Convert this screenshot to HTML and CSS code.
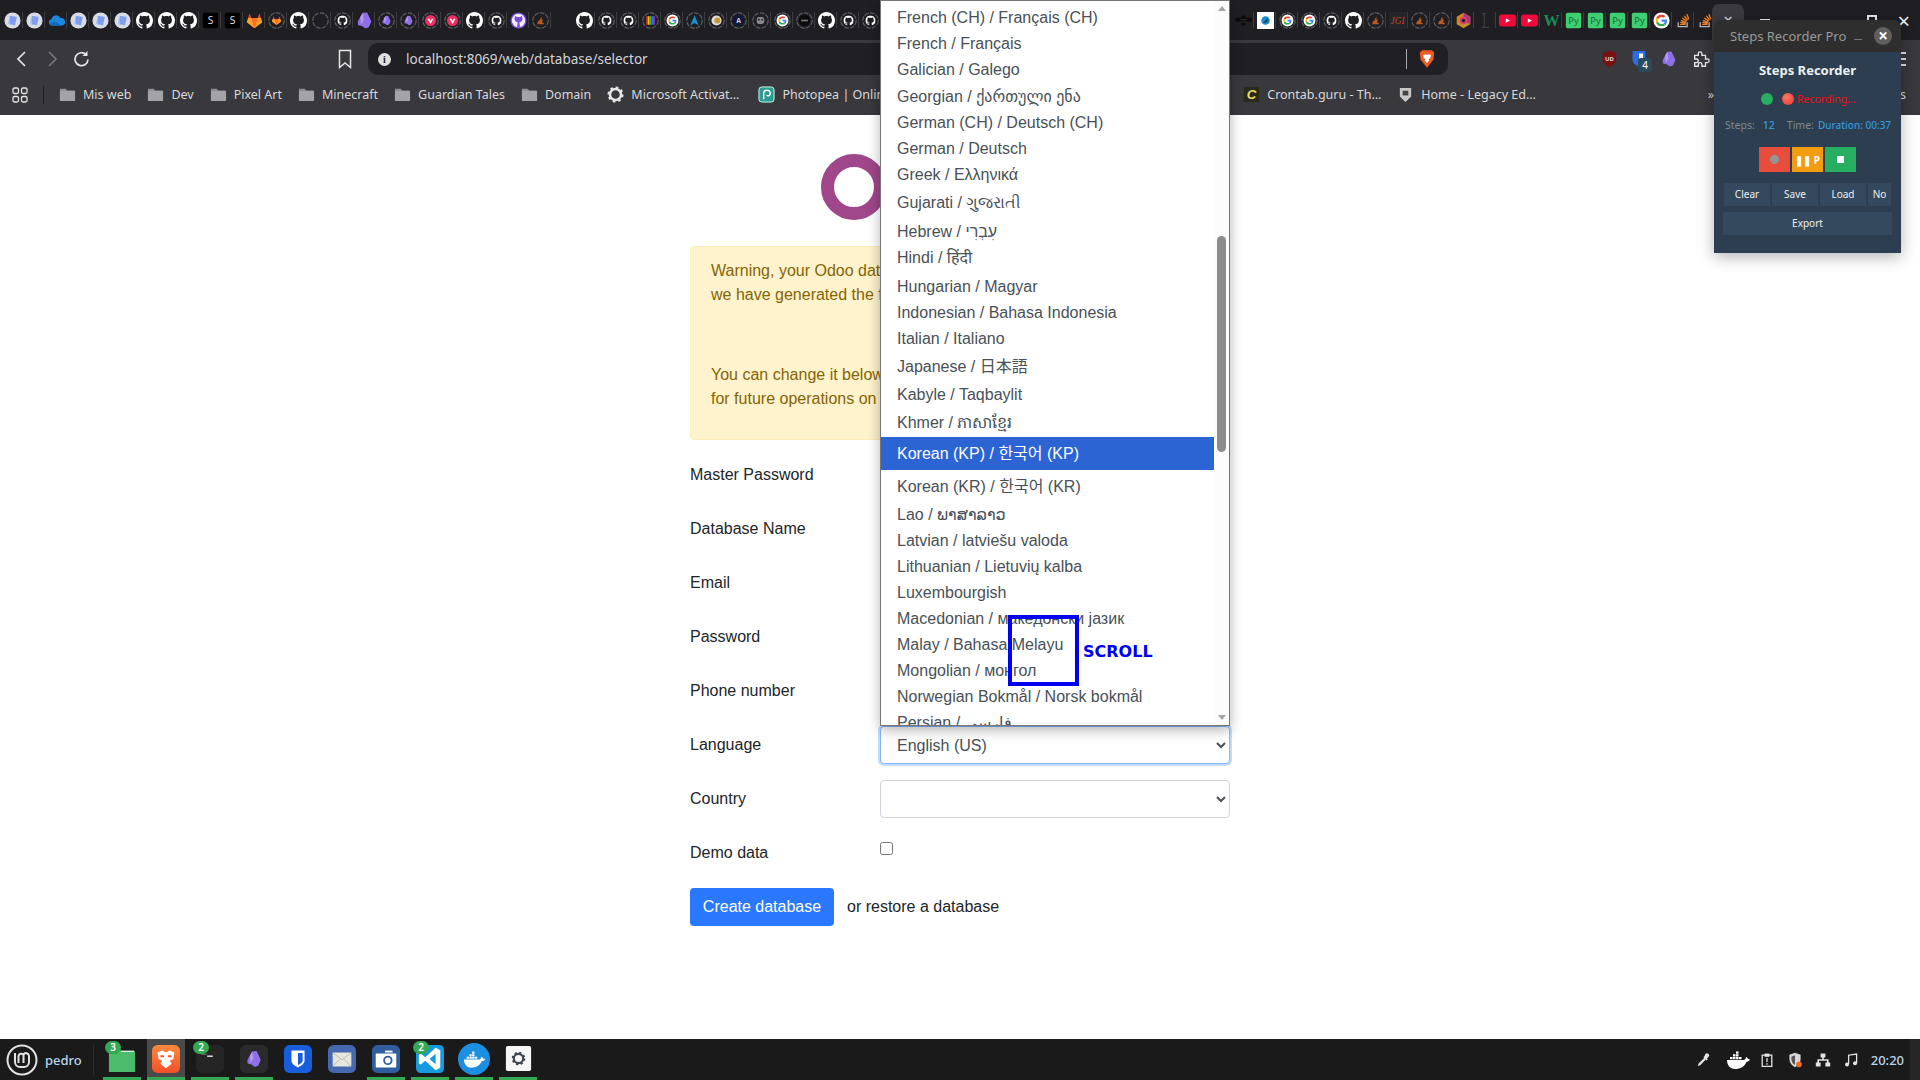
FILE: index.html
```html
<!DOCTYPE html>
<html lang="en">
<head>
    <meta charset="UTF-8">
    <meta name="viewport" content="width=device-width, initial-scale=1.0">
    <title>Odoo - Database selector</title>
    <link rel="stylesheet" href="styles.css">
</head>
<body>
    <!-- shared icons -->
    <svg class="defs" aria-hidden="true">
        <symbol id="m-gh" viewBox="0 0 16 16"><path fill="#fff" d="M8 0C3.58 0 0 3.58 0 8c0 3.54 2.29 6.53 5.47 7.59.4.07.55-.17.55-.38 0-.19-.01-.82-.01-1.49-2.01.37-2.53-.49-2.69-.94-.09-.23-.48-.94-.82-1.13-.28-.15-.68-.52-.01-.53.63-.01 1.08.58 1.23.82.72 1.21 1.87.87 2.33.66.07-.52.28-.87.51-1.07-1.78-.2-3.64-.89-3.64-3.95 0-.87.31-1.59.82-2.15-.08-.2-.36-1.02.08-2.12 0 0 .67-.21 2.2.82.64-.18 1.32-.27 2-.27.68 0 1.36.09 2 .27 1.53-1.04 2.2-.82 2.2-.82.44 1.1.16 1.92.08 2.12.51.56.82 1.27.82 2.15 0 3.07-1.87 3.75-3.65 3.95.29.25.54.73.54 1.48 0 1.07-.01 1.93-.01 2.2 0 .21.15.46.55.38A8.013 8.013 0 0016 8c0-4.42-3.58-8-8-8z"/></symbol>
        <symbol id="m-g" viewBox="0 0 48 48"><path fill="#EA4335" d="M24 9.500c3.500 0 6.700 1.200 9.200 3.600l6.900-6.900C35.900 2.400 30.500 0 24 0 14.600 0 6.500 5.400 2.600 13.200l8 6.200C12.500 13.700 17.800 9.500 24 9.500z"/><path fill="#4285F4" d="M46.900 24.500c0-1.600-.1-3.100-.4-4.500H24v9h12.900c-.6 3-2.200 5.500-4.700 7.200l7.700 6c4.500-4.200 7-10.300 7-17.700z"/><path fill="#FBBC05" d="M10.500 28.600c-.5-1.400-.8-3-.8-4.600s.3-3.200.8-4.600l-8-6.200C.9 16.500 0 20.100 0 24s.9 7.500 2.600 10.800l7.900-6.200z"/><path fill="#34A853" d="M24 48c6.500 0 11.900-2.100 15.900-5.800l-7.700-6c-2.200 1.400-4.900 2.300-8.200 2.300-6.200 0-11.500-4.200-13.400-9.900l-8 6.200C6.500 42.600 14.600 48 24 48z"/></symbol>
        <symbol id="m-obs" viewBox="0 0 20 20"><path fill="#8e6fe8" d="M8 1l5-.5 3 6 2 5-3 6.500-4 1.500-4-3-4.500-1-.5-4z"/><path fill="#b49cf5" d="M8 1l1 8-3 6-1-9z"/></symbol>
        <symbol id="m-lab" viewBox="0 0 20 20"><path fill="#e24329" d="M10 19L1 12l1.500-5L4 1.500 6.500 7h7L16 1.500 17.500 7l1.500 5z"/><path fill="#fca326" d="M10 19L1 12l1.500-5H6.500zM10 19l9-7-1.500-5h-4z"/><path fill="#fc6d26" d="M6.500 7h7L10 19z"/></symbol>
        <symbol id="m-so" viewBox="0 0 20 20"><path fill="#bcbbbb" d="M3 12v6h12v-6h-1.500v4.500h-9V12z"/><path stroke="#f48024" stroke-width="1.600" d="M6 14.500h6.500M6.200 12.200l6.400 1M7 9.800l6 2.300M8.500 7l5.300 3.700M11 4.500l3.800 5M14 2.500l2.200 6" fill="none"/></symbol>

        <symbol id="doc" viewBox="0 0 20 20"><circle cx="10" cy="10" r="9.500" fill="#d9dce4"/><path fill="#7d9df0" d="M7 4.500l8 1.500-2 9.500-8-1.500z"/><path fill="#b9c9f5" d="M6 6l1 8.500-2-.5z"/></symbol>
        <symbol id="cloud" viewBox="0 0 20 20"><path fill="#1f86dc" d="M5 16a4 4 0 01-.8-7.900 5.500 5.500 0 0110.300-1 4.500 4.500 0 012 8.900z"/><path fill="#0f6cc2" d="M5 16a4 4 0 01-3-1.500c2-3 6-4 9-2l5 3.500z"/></symbol>
        <symbol id="gh" viewBox="0 0 20 20"><use href="#m-gh" width="20" height="20"/></symbol>
        <symbol id="lab" viewBox="0 0 20 20"><use href="#m-lab" width="20" height="20"/></symbol>
        <symbol id="ring" viewBox="0 0 20 20"><circle cx="10" cy="10" r="9" fill="none" stroke="#5b5b60" stroke-width="1.500" stroke-dasharray="5.500 1.400"/></symbol>
        <symbol id="obs" viewBox="0 0 20 20"><use href="#m-obs" width="20" height="20"/></symbol>
        <symbol id="gh-r" viewBox="0 0 20 20"><use href="#ring" width="20" height="20"/><use href="#m-gh" x="4" y="4" width="12" height="12"/></symbol>
        <symbol id="lab-r" viewBox="0 0 20 20"><use href="#ring" width="20" height="20"/><use href="#m-lab" x="4" y="4" width="12" height="12"/></symbol>
        <symbol id="obs-r" viewBox="0 0 20 20"><use href="#ring" width="20" height="20"/><use href="#m-obs" x="4" y="4" width="12" height="12"/></symbol>
        <symbol id="viv-r" viewBox="0 0 20 20"><use href="#ring" width="20" height="20"/><circle cx="10" cy="10" r="6.500" fill="#ee2f62"/><path fill="#fff" d="M6.500 8h2.200L10 10.500 11.300 8h2.200L10 14z"/></symbol>
        <symbol id="gh-p" viewBox="0 0 20 20"><circle cx="10" cy="10" r="9.500" fill="#7a4be0"/><circle cx="10" cy="10" r="7.800" fill="#f4f0ff"/><path fill="#7a4be0" d="M6 4.500l2 1.500h4l2-1.500.7 3.200c0 3-1.700 4.300-3.700 4.500l.7 5.300H8.300l.7-5.300c-2-.2-3.700-1.500-3.700-4.500z"/></symbol>
        <symbol id="so-r" viewBox="0 0 20 20"><use href="#ring" width="20" height="20"/><path fill="#b85a22" d="M6 14.500h8l-.5-2-2-.5 1.500-3-2-.5.5-3-2 2-.5 2.500-2 1z"/></symbol>
        <symbol id="rb-r" viewBox="0 0 20 20"><use href="#ring" width="20" height="20"/><rect x="5" y="5" width="2" height="10" fill="#e33"/><rect x="7" y="5" width="2" height="10" fill="#fb0"/><rect x="9" y="5" width="2" height="10" fill="#3b3"/><rect x="11" y="5" width="2" height="10" fill="#36e"/><rect x="13" y="5" width="2" height="10" fill="#a3d"/></symbol>
        <symbol id="g-r" viewBox="0 0 20 20"><use href="#ring" width="20" height="20"/><circle cx="10" cy="10" r="7" fill="#fff"/><use href="#m-g" x="5" y="5" width="10" height="10"/></symbol>
        <symbol id="a-r" viewBox="0 0 20 20"><use href="#ring" width="20" height="20"/><path fill="#1793d1" d="M10 4l5 12-5-3-5 3z"/></symbol>
        <symbol id="y-r" viewBox="0 0 20 20"><use href="#ring" width="20" height="20"/><circle cx="10" cy="10" r="6" fill="#ddd"/><circle cx="11" cy="10" r="3.500" fill="#c8962a"/></symbol>
        <symbol id="bug-r" viewBox="0 0 20 20"><use href="#ring" width="20" height="20"/><rect x="5.500" y="6" width="9" height="8" rx="3" fill="#8a8a8f"/><rect x="7" y="8" width="2" height="2" fill="#222"/><rect x="11" y="8" width="2" height="2" fill="#222"/></symbol>
        <symbol id="blk-r" viewBox="0 0 20 20"><use href="#ring" width="20" height="20"/><circle cx="10" cy="10" r="6.500" fill="#0a0a0a"/><rect x="6" y="9" width="8" height="2" fill="#777"/></symbol>
        <symbol id="bee" viewBox="0 0 20 20"><ellipse cx="10" cy="10" rx="4" ry="6" fill="#0c0c0c"/><ellipse cx="4" cy="9" rx="4" ry="2.500" fill="#0c0c0c"/><ellipse cx="16" cy="9" rx="4" ry="2.500" fill="#0c0c0c"/><path stroke="#333" d="M6 9h8M6 12h8"/></symbol>
        <symbol id="wsq" viewBox="0 0 20 20"><rect width="20" height="20" fill="#fff"/><circle cx="10" cy="10" r="5" fill="#1d8ec9"/><path fill="#163a56" d="M7 13l6-6-1 5z"/></symbol>
        <symbol id="hex" viewBox="0 0 20 20"><path fill="#c98a2a" d="M10 1l8 4.500v9L10 19l-8-4.500v-9z"/><path fill="#b2357c" d="M10 1l8 4.500v9L10 10z"/><circle cx="10" cy="10" r="4.500" fill="#d43d6c"/><circle cx="10" cy="10" r="2" fill="#2b1a22"/></symbol>
        <symbol id="ibm" viewBox="0 0 20 20"><path stroke="#3e3e42" stroke-width="1.500" fill="none" d="M6 2h5M8.500 2v16M6 18h8"/></symbol>
        <symbol id="yt" viewBox="0 0 20 20"><rect y="3" width="20" height="14" rx="3.500" fill="#f00a3c"/><path fill="#fff" d="M8 7.500l5 2.500-5 2.500z"/></symbol>
        <symbol id="g" viewBox="0 0 20 20"><circle cx="10" cy="10" r="9.500" fill="#fff"/><use href="#m-g" x="3" y="3" width="14" height="14"/></symbol>
        <symbol id="so" viewBox="0 0 20 20"><use href="#m-so" width="20" height="20"/></symbol>
        <symbol id="folder" viewBox="0 0 18 18"><path fill="#8c8c90" d="M1 3h6l2 2h8v11H1z"/><rect x="1" y="5" width="16" height="11" rx="1" fill="#a4a4a8"/></symbol>
        <symbol id="gear" viewBox="0 0 20 20"><circle cx="10" cy="10" r="6.500" fill="none" stroke="currentColor" stroke-width="3"/><circle cx="10" cy="10" r="8" fill="none" stroke="currentColor" stroke-width="3" stroke-dasharray="3 3.280"/></symbol>
        <symbol id="whale" viewBox="0 0 24 18"><path fill="currentColor" d="M1 9h17c1-.2 2-1.800 2-3 1 .4 1.800 1.200 2 2.200.8-.2 1.500 0 2 .4-.8 1.600-2 2.200-3.500 2.100C18.500 15.500 14.500 18 9 18 4 18 1 14 1 9z"/><path fill="currentColor" d="M4 6h2.500v2.300H4zM7 6h2.500v2.300H7zM10 6h2.500v2.300H10zM7 3.200h2.500v2.300H7zM10 3.200h2.500v2.300H10zM13 6h2.500v2.300H13zM10 .4h2.500v2.300H10z"/></symbol>
        <symbol id="lion" viewBox="0 0 20 24"><path fill="#f15a22" d="M4 1h12l3 3-1 9-8 10-8-10-1-9z"/><path fill="#fff" d="M5 7l3-1 2 1 2-1 3 1-1 4-2 1 1 2-3 3-3-3 1-2-2-1z"/></symbol>
    </svg>

    <div class="screen">
        <header class="browser">
            <div class="tabstrip">
                <span class="fav"><svg><use href="#doc"/></svg></span>
                <span class="fav"><svg><use href="#doc"/></svg></span>
                <span class="fav"><svg><use href="#cloud"/></svg></span>
                <span class="fav"><svg><use href="#doc"/></svg></span>
                <span class="fav"><svg><use href="#doc"/></svg></span>
                <span class="fav"><svg><use href="#doc"/></svg></span>
                <span class="fav"><svg><use href="#gh"/></svg></span>
                <span class="fav"><svg><use href="#gh"/></svg></span>
                <span class="fav"><svg><use href="#gh"/></svg></span>
                <span class="fav"><svg viewBox="0 0 20 20"><rect x="1" y="1" width="18" height="18" rx="2" fill="#000"/><text x="10" y="14.500" font-size="12" fill="#ddd" text-anchor="middle" font-family="Noto Sans, sans-serif">S</text></svg></span>
                <span class="fav"><svg viewBox="0 0 20 20"><rect x="1" y="1" width="18" height="18" rx="2" fill="#000"/><text x="10" y="14.500" font-size="12" fill="#ddd" text-anchor="middle" font-family="Noto Sans, sans-serif">S</text></svg></span>
                <span class="fav"><svg><use href="#lab"/></svg></span>
                <span class="fav"><svg><use href="#lab-r"/></svg></span>
                <span class="fav"><svg><use href="#gh"/></svg></span>
                <span class="fav"><svg><use href="#ring"/></svg></span>
                <span class="fav"><svg><use href="#gh-r"/></svg></span>
                <span class="fav"><svg><use href="#obs"/></svg></span>
                <span class="fav"><svg><use href="#obs-r"/></svg></span>
                <span class="fav"><svg><use href="#obs-r"/></svg></span>
                <span class="fav"><svg><use href="#viv-r"/></svg></span>
                <span class="fav"><svg><use href="#viv-r"/></svg></span>
                <span class="fav"><svg><use href="#gh"/></svg></span>
                <span class="fav"><svg><use href="#gh-r"/></svg></span>
                <span class="fav"><svg><use href="#gh-p"/></svg></span>
                <span class="fav"><svg><use href="#so-r"/></svg></span>
                <span class="fav-gap"></span>
                <span class="fav"><svg><use href="#gh"/></svg></span>
                <span class="fav"><svg><use href="#gh-r"/></svg></span>
                <span class="fav"><svg><use href="#gh-r"/></svg></span>
                <span class="fav"><svg><use href="#rb-r"/></svg></span>
                <span class="fav"><svg><use href="#g-r"/></svg></span>
                <span class="fav"><svg><use href="#a-r"/></svg></span>
                <span class="fav"><svg><use href="#y-r"/></svg></span>
                <span class="fav"><svg viewBox="0 0 20 20"><use href="#ring" width="20" height="20"/><circle cx="10" cy="10" r="6.500" fill="#11183c"/><text x="10" y="13" font-size="8" font-weight="700" fill="#ccd" text-anchor="middle" font-family="Noto Sans, sans-serif">A</text></svg></span>
                <span class="fav"><svg><use href="#bug-r"/></svg></span>
                <span class="fav"><svg><use href="#g-r"/></svg></span>
                <span class="fav"><svg><use href="#blk-r"/></svg></span>
                <span class="fav"><svg><use href="#gh"/></svg></span>
                <span class="fav"><svg><use href="#gh-r"/></svg></span>
                <span class="fav"><svg><use href="#gh-r"/></svg></span>
                <span class="fav-hidden"></span>
                <span class="fav"><svg><use href="#bee"/></svg></span>
                <span class="fav"><svg><use href="#wsq"/></svg></span>
                <span class="fav"><svg><use href="#g-r"/></svg></span>
                <span class="fav"><svg><use href="#g-r"/></svg></span>
                <span class="fav"><svg><use href="#gh-r"/></svg></span>
                <span class="fav"><svg><use href="#gh"/></svg></span>
                <span class="fav"><svg><use href="#so-r"/></svg></span>
                <span class="fav"><svg viewBox="0 0 20 20"><rect width="20" height="20" fill="#26262a"/><text x="10" y="14.500" font-size="11" fill="#c0402a" text-anchor="middle" font-family="Liberation Serif, serif" font-style="italic">JGI</text></svg></span>
                <span class="fav"><svg><use href="#so-r"/></svg></span>
                <span class="fav"><svg><use href="#so-r"/></svg></span>
                <span class="fav"><svg><use href="#hex"/></svg></span>
                <span class="fav"><svg><use href="#ibm"/></svg></span>
                <span class="fav"><svg><use href="#yt"/></svg></span>
                <span class="fav"><svg><use href="#yt"/></svg></span>
                <span class="fav"><svg viewBox="0 0 20 20"><text x="10" y="16" font-size="19" font-weight="700" fill="#1d8a58" text-anchor="middle" font-family="Liberation Serif, serif">W</text></svg></span>
                <span class="fav"><svg viewBox="0 0 20 20"><rect x="1" y="1" width="18" height="18" rx="2" fill="#3fcf73"/><text x="10" y="14" font-size="11" fill="#136b38" text-anchor="middle" font-family="Noto Sans, sans-serif">Py</text></svg></span>
                <span class="fav"><svg viewBox="0 0 20 20"><rect x="1" y="1" width="18" height="18" rx="2" fill="#3fcf73"/><text x="10" y="14" font-size="11" fill="#136b38" text-anchor="middle" font-family="Noto Sans, sans-serif">Py</text></svg></span>
                <span class="fav"><svg viewBox="0 0 20 20"><rect x="1" y="1" width="18" height="18" rx="2" fill="#3fcf73"/><text x="10" y="14" font-size="11" fill="#136b38" text-anchor="middle" font-family="Noto Sans, sans-serif">Py</text></svg></span>
                <span class="fav"><svg viewBox="0 0 20 20"><rect x="1" y="1" width="18" height="18" rx="2" fill="#3fcf73"/><text x="10" y="14" font-size="11" fill="#136b38" text-anchor="middle" font-family="Noto Sans, sans-serif">Py</text></svg></span>
                <span class="fav"><svg><use href="#g"/></svg></span>
                <span class="fav"><svg><use href="#so"/></svg></span>
                <span class="fav"><svg><use href="#so"/></svg></span>
                <span class="active-tab">×</span>
                <span class="win-btns">
                    <span class="win-min"></span>
                    <span class="win-max"></span>
                    <span class="win-close">×</span>
                </span>
            </div>

            <div class="toolbar">
                <svg class="nav-icon" viewBox="0 0 20 20"><path d="M13 3l-7 7 7 7" fill="none" stroke="#e6e6e8" stroke-width="1.700"/></svg>
                <svg class="nav-icon" viewBox="0 0 20 20"><path d="M7 3l7 7-7 7" fill="none" stroke="#77777b" stroke-width="1.700"/></svg>
                <svg class="nav-icon" viewBox="0 0 20 20"><path d="M16 10.500a6.500 6.500 0 11-2-5" fill="none" stroke="#e6e6e8" stroke-width="1.700"/><path d="M15.500 2v5h-5z" fill="#e6e6e8"/></svg>
                <svg class="bookmark-icon" viewBox="0 0 16 20"><path d="M2.500 1.500h11v17L8 14l-5.500 4.500z" fill="none" stroke="#e6e6e8" stroke-width="1.500"/></svg>
                <div class="urlbar">
                    <span class="info-dot">i</span>
                    <span class="url">localhost:8069/web/database/selector</span>
                    <span class="url-sep"></span>
                    <svg class="brave" viewBox="0 0 20 24"><use href="#lion"/></svg>
                </div>
                <div class="ext">
                    <svg class="ext-ub" viewBox="0 0 20 22"><path fill="#7a1010" d="M10 0l9 3v8c0 5-4 9-9 11-5-2-9-6-9-11V3z"/><text x="10" y="14" font-size="8" font-weight="700" fill="#ddd" text-anchor="middle" font-family="Noto Sans, sans-serif">UD</text></svg>
                    <span class="ext-bw">
                        <svg viewBox="0 0 20 22"><path fill="#2a6de0" d="M2 1h16v11c0 4-4 7-8 9-4-2-8-5-8-9z"/><path fill="#fff" d="M10 4h5v8c0 2-2 4-5 5z"/></svg>
                        <span class="ext-badge">4</span>
                    </span>
                    <svg class="ext-obs" viewBox="0 0 20 20"><use href="#m-obs"/></svg>
                    <svg class="ext-puzzle" viewBox="0 0 20 20"><path fill="none" stroke="#e6e6e8" stroke-width="1.500" d="M3 6h4V4a2 2 0 014 0v2h4v4h2a2 2 0 010 4h-2v4h-4v-2a2 2 0 00-4 0v2H3v-4h2a2 2 0 000-4H3z"/></svg>
                    <span class="menu-lines"></span>
                </div>
            </div>

            <nav class="bookmarks">
                <svg class="apps" viewBox="0 0 16 16"><g fill="none" stroke="#e6e6e8" stroke-width="1.300"><rect x="1" y="1" width="5.500" height="5.500" rx="1.500"/><rect x="9.500" y="1" width="5.500" height="5.500" rx="1.500"/><rect x="1" y="9.500" width="5.500" height="5.500" rx="1.500"/><rect x="9.500" y="9.500" width="5.500" height="5.500" rx="1.500"/></g></svg>
                <span class="bm-sep"></span>
                <a class="bm"><svg><use href="#folder"/></svg>Mis web</a>
                <a class="bm"><svg><use href="#folder"/></svg>Dev</a>
                <a class="bm"><svg><use href="#folder"/></svg>Pixel Art</a>
                <a class="bm"><svg><use href="#folder"/></svg>Minecraft</a>
                <a class="bm"><svg><use href="#folder"/></svg>Guardian Tales</a>
                <a class="bm"><svg><use href="#folder"/></svg>Domain</a>
                <a class="bm bm-ms"><svg class="bm-gear"><use href="#gear"/></svg>Microsoft Activat…</a>
                <a class="bm"><svg viewBox="0 0 18 18"><rect x="1" y="1" width="16" height="16" rx="3" fill="#2c9c93" stroke="#cfe" stroke-width="1"/><path d="M6 14V8a3.500 3.500 0 117 0c0 2-2 3-4 2" fill="none" stroke="#fff" stroke-width="1.500"/></svg>Photopea | Online</a>
                <a class="bm bm-crontab"><svg viewBox="0 0 18 18"><rect x="1" y="1" width="16" height="16" fill="#2a2a1a"/><text x="9" y="14" font-size="14" font-style="italic" font-weight="700" fill="#e8e060" text-anchor="middle" font-family="Liberation Sans, sans-serif">C</text></svg>Crontab.guru - Th…</a>
                <a class="bm"><svg viewBox="0 0 18 18"><path d="M3 2h12v9l-6 6-6-6z" fill="#c8c8c8"/><rect x="6" y="5" width="6" height="5" fill="#444"/></svg>Home - Legacy Ed…</a>
                <span class="bm-more">»</span>
                <span class="bm-other">s</span>
            </nav>
        </header>

        <main class="page">
            <div class="db-box">
                <div class="logo"><span class="logo-o"></span></div>
                <div class="alert">
                    <p>Warning, your Odoo database manager is not protected.<br>we have generated the following master password for it:</p>
                    <p class="alert-low">You can change it below but be sure to remember it, it will be asked<br>for future operations on databases.</p>
                </div>
                <form class="db-form">
                    <label>Master Password</label><input class="field" type="text">
                    <label>Database Name</label><input class="field" type="text">
                    <label>Email</label><input class="field" type="text">
                    <label>Password</label><input class="field" type="password">
                    <label>Phone number</label><input class="field" type="text">
                    <label>Language</label>
                    <select class="field field-focus"><option>English (US)</option></select>
                    <label>Country</label>
                    <select class="field"><option></option></select>
                    <label class="demo-label">Demo data</label>
                    <div class="demo-check"><input type="checkbox"></div>
                </form>
                <div class="actions">
                    <button class="btn-create" type="button">Create database</button>
                    <span>or restore a database</span>
                </div>
            </div>
        </main>

        <footer class="taskbar">
            <div class="start">
                <svg viewBox="0 0 32 32"><circle cx="16" cy="16" r="14.500" fill="none" stroke="#e2e2e2" stroke-width="2"/><path d="M9 9v9a5 5 0 005 5h4a5 5 0 005-5v-6a3 3 0 00-5.500-1.500A3 3 0 0012.500 12v7" fill="none" stroke="#e2e2e2" stroke-width="2"/><path d="M17.500 11v8" stroke="#e2e2e2" stroke-width="2"/></svg>
                <span class="user">pedro</span>
            </div>
            <div class="launcher">
                <span class="app on"><svg viewBox="0 0 30 30"><path fill="#4cbb6c" d="M1 5h11l3 3h14v22H1z" transform="translate(0 -1)"/><rect x="14" y="6" width="14" height="1.500" fill="#d8f2df"/></svg><b class="badge">3</b></span>
                <span class="app on sel"><svg viewBox="0 0 30 30"><defs><linearGradient id="brv" x1="0" y1="0" x2="0" y2="1"><stop offset="0" stop-color="#ff8a3c"/><stop offset="1" stop-color="#f0502a"/></linearGradient></defs><rect width="30" height="30" rx="6" fill="url(#brv)"/><path fill="#fff" d="M6 8l5-2 4 2 4-2 5 2-1 7-4 2 2 3-6 5-6-5 2-3-4-2z"/><path fill="#f0602a" d="M9 11h4v2H9zM17 11h4v2h-4z"/></svg></span>
                <span class="app on"><svg viewBox="0 0 30 30"><rect width="30" height="30" rx="6" fill="#252525"/><path d="M6 10h6" stroke="#777" stroke-width="1"/><path d="M12 12h6" stroke="#eee" stroke-width="1.500"/></svg><b class="badge">2</b></span>
                <span class="app on"><svg viewBox="0 0 30 30"><rect width="30" height="30" rx="6" fill="#2a2a2a"/><use href="#m-obs" x="6" y="5" width="18" height="20"/></svg></span>
                <span class="app"><svg viewBox="0 0 30 30"><rect width="30" height="30" rx="6" fill="#175ddc"/><path fill="#fff" d="M8 6h14v11c0 3-4 6-7 7-3-1-7-4-7-7z"/><path fill="#175ddc" d="M15 8.500h5v8c0 2-3 4-5 5z"/></svg></span>
                <span class="app"><svg viewBox="0 0 30 30"><rect width="30" height="30" rx="6" fill="#4668ae"/><rect x="5" y="8" width="20" height="15" rx="1" fill="#e6e6de"/><path d="M5 8l10 8 10-8M5 23l8-8M25 23l-8-8" fill="none" stroke="#b3b3a8" stroke-width=".8"/></svg></span>
                <span class="app on"><svg viewBox="0 0 30 30"><rect width="30" height="30" rx="6" fill="#2f5d9e"/><rect x="4" y="9" width="22" height="15" rx="1" fill="#fff"/><rect x="14" y="6" width="8" height="2" fill="#fff"/><circle cx="17" cy="16.500" r="4" fill="none" stroke="#2f5d9e" stroke-width="2"/></svg></span>
                <span class="app on"><svg viewBox="0 0 30 30"><rect width="30" height="30" rx="5" fill="#159ae0"/><path fill="#fff" d="M21 3l5 2.500v19L21 27 10 17l-5 4-2-1.500V10.500L5 9l5 4zM21 9.500L14.500 15l6.500 5.500z"/></svg><b class="badge">2</b></span>
                <span class="app on"><svg class="docker" viewBox="0 0 32 32"><circle cx="16" cy="16" r="16" fill="#1d8fe1"/><use href="#whale" x="5" y="8" width="22" height="17"/></svg></span>
                <span class="app on"><svg class="settings" viewBox="0 0 30 30"><rect x="1" y="1" width="28" height="28" rx="2" fill="#f6f6f6"/><use href="#gear" x="7" y="7" width="16" height="16"/></svg></span>
            </div>
            <div class="tray">
                <svg viewBox="0 0 20 20"><path fill="#e4e4e4" d="M13 2.500a2.500 2.500 0 014 3.500l-2 2 1 1-1.500 1.500-1-1-7 7-3 1 1-3 7-7-1-1L12 5z"/></svg>
                <svg class="tray-docker" viewBox="0 0 24 18"><use href="#whale"/></svg>
                <svg viewBox="0 0 20 20"><path d="M4 4h12v14H4z" fill="none" stroke="#e4e4e4" stroke-width="1.600"/><rect x="7" y="2" width="6" height="4" fill="#e4e4e4"/><rect x="9.200" y="7.500" width="1.600" height="5" fill="#e4e4e4"/><rect x="9.200" y="14" width="1.600" height="1.800" fill="#e4e4e4"/></svg>
                <svg viewBox="0 0 20 20"><path fill="#d6d6d6" d="M10 1l7 2.500v6c0 4-3 7.500-7 9.500-4-2-7-5.500-7-9.500v-6z"/><path fill="#555" d="M10 4v12c-2.500-1-4.500-4-4.500-7V6z"/><circle cx="15" cy="15.500" r="3.500" fill="#f06a23"/></svg>
                <svg viewBox="0 0 20 20"><path fill="#e4e4e4" d="M7 2h6v5H11v2h6v4h2v5h-6v-5h2v-2H5v2h2v5H1v-5h2V9h6V7H7z"/></svg>
                <svg viewBox="0 0 20 20"><path d="M7 15V4l10-1.500V14" fill="none" stroke="#e4e4e4" stroke-width="1.600"/><circle cx="5" cy="15.500" r="2.500" fill="#e4e4e4"/><circle cx="15" cy="14" r="2.500" fill="#e4e4e4"/></svg>
                <span class="clock">20:20</span>
            </div>
        </footer>

        <!-- open language dropdown -->
        <div class="lang-list">
            <ul class="lang-items">
                <li>French (CH) / Français (CH)</li>
                <li>French / Français</li>
                <li>Galician / Galego</li>
                <li class="h27">Georgian / ქართული ენა</li>
                <li>German (CH) / Deutsch (CH)</li>
                <li>German / Deutsch</li>
                <li>Greek / Ελληνικά</li>
                <li class="h30">Gujarati / ગુજરાતી</li>
                <li class="h28">Hebrew / עִבְרִי</li>
                <li class="h28 up">Hindi / हिंदी</li>
                <li>Hungarian / Magyar</li>
                <li>Indonesian / Bahasa Indonesia</li>
                <li>Italian / Italiano</li>
                <li class="h30">Japanese / 日本語</li>
                <li>Kabyle / Taqbaylit</li>
                <li class="h29">Khmer / ភាសាខ្មែរ</li>
                <li class="h33 picked">Korean (KP) / 한국어 (KP)</li>
                <li class="h32">Korean (KR) / 한국어 (KR)</li>
                <li>Lao / ພາສາລາວ</li>
                <li>Latvian / latviešu valoda</li>
                <li>Lithuanian / Lietuvių kalba</li>
                <li>Luxembourgish</li>
                <li>Macedonian / македонски јазик</li>
                <li>Malay / Bahasa Melayu</li>
                <li>Mongolian / монгол</li>
                <li>Norwegian Bokmål / Norsk bokmål</li>
                <li>Persian / فارسی</li>
            </ul>
            <div class="lang-scroll">
                <span class="arrow-up"></span>
                <span class="thumb"></span>
                <span class="arrow-down"></span>
            </div>
        </div>

        <!-- tutorial annotation drawn by the recorder -->
        <div class="scroll-mark"></div>
        <div class="scroll-label">SCROLL</div>

        <!-- floating extension window -->
        <aside class="recorder">
            <div class="rec-title">
                <span>Steps Recorder Pro</span>
                <span class="rec-min"></span>
                <span class="rec-close">×</span>
            </div>
            <div class="rec-body">
                <h3>Steps Recorder</h3>
                <div class="rec-status">
                    <span class="dot-green"></span>
                    <span class="dot-red"></span>
                    <span class="rec-state">Recording...</span>
                </div>
                <div class="rec-stats">
                    <span>Steps:</span><b class="num">12</b>
                    <span class="time-label">Time:</span><b class="dur">Duration: 00:37</b>
                </div>
                <div class="rec-controls">
                    <span class="ctl red"><i class="ctl-dot"></i></span>
                    <span class="ctl amber">❚❚ P</span>
                    <span class="ctl green"><i class="ctl-square"></i></span>
                </div>
                <div class="rec-row">
                    <span class="rec-btn">Clear</span>
                    <span class="rec-btn">Save</span>
                    <span class="rec-btn">Load</span>
                    <span class="rec-btn rec-btn-cut">No</span>
                </div>
                <div class="rec-btn rec-export">Export</div>
            </div>
        </aside>
    </div>
</body>
</html>
```
FILE: styles.css
```css
* {
    box-sizing: border-box;
}

html, body {
    margin: 0;
    height: 100%;
    overflow: hidden;
}

body {
    font-family: "Liberation Sans", Arial, sans-serif;
    background: #fff;
}

.defs {
    position: absolute;
    width: 0;
    height: 0;
}

.screen {
    position: relative;
    width: 1920px;
    height: 1080px;
    display: flex;
    flex-direction: column;
    overflow: hidden;
}

/* browser chrome */
.browser {
    flex: none;
    height: 115px;
    background: #1e1e23;
    color: #dcdce0;
    font-family: "Noto Sans", sans-serif;
}

.tabstrip {
    height: 40px;
    padding-left: 1px;
    display: flex;
    align-items: center;
}

.fav {
    width: 22px;
    height: 22px;
    flex: none;
    display: flex;
    align-items: center;
    justify-content: center;
    background: linear-gradient(#3b3b40, #3b3b40) right center / 1px 16px no-repeat;
}

.fav svg {
    width: 17px;
    height: 17px;
}

.fav-gap {
    width: 22px;
    flex: none;
}

.fav-hidden {
    width: 351px;
    flex: none;
}

.active-tab {
    width: 32px;
    height: 36px;
    margin-left: -4px;
    margin-top: 4px;
    background: #3a3a3f;
    border-radius: 7px 7px 0 0;
    text-align: center;
    font-size: 16px;
    line-height: 32px;
}

.win-btns {
    flex: 1;
    display: flex;
    align-items: center;
    padding-right: 10px;
    position: relative;
}

.win-min {
    width: 10px;
    height: 2px;
    margin-left: 16px;
    background: #e6e6e6;
}

.win-max {
    width: 10px;
    height: 10px;
    margin-left: auto;
    margin-right: 20px;
    border: 2px solid #e6e6e6;
}

.win-close {
    font-size: 22px;
    line-height: 1;
    color: #eee;
}

.toolbar {
    height: 36px;
    background: #38383d;
    display: flex;
    align-items: center;
    padding: 2px 0 0 12px;
    gap: 10px;
}

.nav-icon {
    width: 20px;
    height: 20px;
}

.bookmark-icon {
    width: 16px;
    height: 20px;
    margin-left: 235px;
    margin-right: 5px;
}

.urlbar {
    width: 1080px;
    height: 32px;
    background: #1f1f24;
    border-radius: 10px;
    display: flex;
    align-items: center;
    padding-left: 10px;
}

.info-dot {
    width: 13px;
    height: 13px;
    border-radius: 50%;
    background: #e0e0e0;
    color: #222;
    font: 700 10px/13px "Liberation Serif", serif;
    text-align: center;
}

.url {
    margin-left: 15px;
    font-size: 13.5px;
    color: #d3d3d8;
}

.url-sep {
    width: 1px;
    height: 20px;
    margin-left: auto;
    background: #aaa;
}

.brave {
    width: 16px;
    height: 20px;
    margin: 0 13px 0 12px;
}

.ext {
    flex: 1;
    display: flex;
    align-items: center;
    padding-left: 144px;
    gap: 14px;
}

.ext-ub {
    width: 15px;
    height: 18px;
}

.ext-bw {
    position: relative;
    width: 16px;
    height: 18px;
}

.ext-bw svg {
    width: 16px;
    height: 18px;
}

.ext-badge {
    position: absolute;
    left: 7px;
    top: 8px;
    width: 14px;
    height: 14px;
    border-radius: 3px;
    background: #2c4a5e;
    color: #fff;
    font-size: 10px;
    line-height: 14px;
    text-align: center;
}

.ext-obs {
    width: 16px;
    height: 18px;
}

.ext-puzzle {
    width: 18px;
    height: 18px;
    margin-left: 1px;
}

.menu-lines {
    width: 8px;
    height: 14px;
    margin-left: auto;
    margin-right: 14px;
    border-top: 2px solid #ddd;
    border-bottom: 2px solid #ddd;
    background: linear-gradient(#ddd, #ddd) center / 100% 2px no-repeat;
}

.bookmarks {
    height: 39px;
    background: #38383d;
    display: flex;
    align-items: center;
    padding: 0 14px 2px 12px;
    font-size: 12.5px;
    color: #d8d8dc;
}

.apps {
    width: 16px;
    height: 16px;
}

.bm-sep {
    width: 1px;
    height: 18px;
    margin: 0 15px;
    background: #1e1e23;
}

.bm {
    display: flex;
    align-items: center;
    gap: 7px;
    margin-right: 16px;
    white-space: nowrap;
}

.bm svg {
    width: 17px;
    height: 17px;
    flex: none;
}

.bm-gear {
    color: #e6e6e6;
}

.bm-ms {
    margin-right: 19px;
}

.bm-crontab {
    margin-left: 336px;
}

.bm-more {
    margin-left: auto;
    margin-right: 186px;
}

/* odoo page */
.page {
    flex: 1;
    background: #fff;
    color: #212529;
    font-size: 16px;
    line-height: 24px;
}

.db-box {
    width: 540px;
    margin: 0 auto;
}

.logo {
    height: 131px;
    padding: 39px 0 0 131px;
}

.logo-o {
    display: block;
    width: 66px;
    height: 66px;
    border: 13px solid #a0468a;
    border-radius: 50%;
}

.alert {
    height: 194px;
    margin-bottom: 16px;
    padding: 12px 20px;
    background: #fff3cd;
    border: 1px solid #ffeeba;
    border-radius: 4px;
    color: #856404;
    white-space: nowrap;
    overflow: hidden;
}

.alert p {
    margin: 0;
}

.alert-low {
    padding-top: 56px;
}

.db-form {
    display: grid;
    grid-template-columns: 190px 350px;
    row-gap: 16px;
}

.db-form label {
    padding-top: 7px;
}

.field {
    width: 100%;
    height: 38px;
    padding: 6px 12px;
    border: 1px solid #ced4da;
    border-radius: 4px;
    background: #fff;
    color: #495057;
    font: 16px/24px "Liberation Sans", Arial, sans-serif;
}

.field-focus {
    border-color: #86b7fe;
    box-shadow: 0 0 0 2px rgba(13, 110, 253, .25);
}

.demo-check input {
    display: block;
    width: 13px;
    height: 13px;
    margin: 8px 0 0 0;
}

.actions {
    display: flex;
    align-items: center;
    gap: 13px;
    margin-top: 23px;
}

.btn-create {
    width: 144px;
    height: 38px;
    border: none;
    border-radius: 4px;
    background: #2a78fd;
    color: #fff;
    font: 16px/24px "Liberation Sans", Arial, sans-serif;
}

/* panel */
.taskbar {
    flex: none;
    height: 41px;
    background: #1a1a1a;
    display: flex;
    align-items: center;
    font-family: "Noto Sans", sans-serif;
}

.start {
    width: 95px;
    height: 100%;
    display: flex;
    align-items: center;
    gap: 7px;
    padding-left: 6px;
    background: linear-gradient(#2c2c2c, #2c2c2c) right 1px center / 1px 30px no-repeat;
}

.start svg {
    width: 32px;
    height: 32px;
    flex: none;
}

.user {
    font-size: 13px;
    font-weight: 500;
    color: #b9d4ee;
}

.launcher {
    display: flex;
    gap: 6px;
    height: 100%;
    margin-left: 8px;
}

.app {
    position: relative;
    width: 38px;
    height: 100%;
    padding-bottom: 2px;
    display: flex;
    align-items: center;
    justify-content: center;
}

.app svg {
    width: 28px;
    height: 30px;
}

.app.on {
    box-shadow: inset 0 -3px 0 #35a853;
}

.app.sel {
    background: #4a4a4a;
}

.app .docker {
    width: 32px;
    height: 32px;
    color: #fff;
}

.app .settings {
    width: 27px;
    height: 27px;
    color: #3d4550;
}

.badge {
    position: absolute;
    left: 2px;
    top: 2px;
    width: 16px;
    height: 13px;
    border-radius: 7px;
    background: #35a853;
    color: #fff;
    font-size: 10px;
    font-weight: 600;
    line-height: 13px;
    text-align: center;
}

.tray {
    margin-left: auto;
    padding-right: 10px;
    height: 100%;
    display: flex;
    align-items: center;
    gap: 12px;
    box-shadow: inset -10px 0 0 #262626;
    color: #fff;
}

.tray svg {
    width: 16px;
    height: 16px;
}

.tray .tray-docker {
    width: 24px;
    height: 18px;
    margin-left: 3px;
    margin-right: -3px;
}

.clock {
    margin-right: 6px;
    font-size: 13px;
    font-weight: 500;
    color: #b9d4ee;
}

/* language dropdown popup */
.lang-list {
    position: absolute;
    left: 880px;
    top: 0;
    width: 350px;
    height: 726px;
    display: flex;
    background: #fff;
    border: 1px solid #767676;
    box-shadow: 0 4px 12px rgba(0, 0, 0, .3);
    overflow: hidden;
}

.lang-items {
    flex: 1;
    margin: 0;
    padding: 4px 0 0;
    list-style: none;
    color: #495057;
    font-size: 16px;
    font-family: "Liberation Sans", "DejaVu Sans", "Noto Sans", "Noto Sans CJK JP", sans-serif;
}

.lang-items li {
    height: 26px;
    padding-left: 16px;
    line-height: 26px;
    white-space: nowrap;
}

.lang-items .h27 { height: 27px; line-height: 27px; }
.lang-items .h28 { height: 28px; line-height: 28px; }
.lang-items .h29 { height: 29px; line-height: 29px; }
.lang-items .h30 { height: 30px; line-height: 30px; }
.lang-items .h32 { height: 32px; line-height: 34px; }
.lang-items .h33 { height: 33px; line-height: 34px; }
.lang-items .up { line-height: 24px; }

.lang-items .picked {
    background: #2d64d3;
    color: #fff;
}

.lang-scroll {
    position: relative;
    flex: none;
    width: 15px;
    background: #fcfcfc;
    display: flex;
    flex-direction: column;
    align-items: center;
}

.arrow-up {
    margin-top: 5px;
    border: 4px solid transparent;
    border-top: 0;
    border-bottom: 5px solid #a3a3a3;
}

.thumb {
    width: 9px;
    height: 216px;
    margin-top: 225px;
    border-radius: 5px;
    background: #8c8c8c;
}

.arrow-down {
    margin-top: auto;
    margin-bottom: 5px;
    border: 4px solid transparent;
    border-bottom: 0;
    border-top: 5px solid #a3a3a3;
}

.scroll-mark {
    position: absolute;
    left: 1008px;
    top: 615px;
    width: 71px;
    height: 71px;
    border: 4px solid #0000f0;
}

.scroll-label {
    position: absolute;
    left: 1083px;
    top: 642px;
    font: 700 16px/20px "DejaVu Sans", sans-serif;
    color: #0000f0;
}

/* recorder window */
.recorder {
    position: absolute;
    left: 1714px;
    top: 20px;
    width: 187px;
    height: 233px;
    border-radius: 8px 8px 0 0;
    background: #2c3e50;
    box-shadow: 0 4px 16px rgba(0, 0, 0, .3);
    overflow: hidden;
    font-family: "Noto Sans", sans-serif;
}

.rec-title {
    height: 32px;
    background: #2e2e2e;
    display: flex;
    align-items: center;
    padding: 0 9px 0 16px;
    font-size: 13px;
    color: #9a9a9a;
}

.rec-min {
    width: 8px;
    height: 1px;
    margin: 6px 0 0 8px;
    background: #777;
}

.rec-close {
    width: 18px;
    height: 18px;
    margin-left: auto;
    border-radius: 50%;
    background: #5f5f5f;
    color: #fff;
    font-size: 17px;
    font-weight: 700;
    line-height: 17px;
    text-align: center;
}

.rec-body h3 {
    margin: 9px 0 0;
    font-size: 13px;
    line-height: 18px;
    font-weight: 700;
    text-align: center;
    color: #ecf0f1;
}

.rec-status {
    display: flex;
    align-items: center;
    margin-top: 12px;
    padding-left: 47px;
    height: 16px;
}

.dot-green {
    width: 12px;
    height: 12px;
    border-radius: 50%;
    background: #27ae60;
}

.dot-red {
    width: 12px;
    height: 12px;
    margin-left: 9px;
    border-radius: 50%;
    background: radial-gradient(circle at 40% 35%, #ff7a6a, #e8302a);
}

.rec-state {
    margin-left: 3px;
    font-size: 10.5px;
    color: #ee1111;
}

.rec-stats {
    display: flex;
    align-items: center;
    margin-top: 10px;
    padding-left: 11px;
    height: 16px;
    font-size: 10.5px;
    color: #7f8c8d;
    white-space: nowrap;
    width: 178px;
    overflow: hidden;
}

.rec-stats b {
    font-weight: 500;
    color: #3498db;
}

.num {
    margin-left: 8px;
}

.time-label {
    margin-left: 12px;
}

.rec-stats .dur {
    margin-left: 4px;
    font-size: 10px;
}

.rec-controls {
    display: flex;
    gap: 2px;
    margin: 14px 0 0 45px;
}

.ctl {
    width: 31px;
    height: 25px;
    display: flex;
    align-items: center;
    justify-content: center;
    color: #fff;
    font-size: 10px;
    font-weight: 700;
}

.red { background: #e74c3c; }
.amber { background: #f39c12; }
.green { background: #27ae60; }

.ctl-dot {
    width: 9px;
    height: 9px;
    border-radius: 50%;
    background: #959595;
}

.ctl-square {
    width: 7px;
    height: 7px;
    background: #fff;
}

.rec-row {
    display: flex;
    gap: 2px;
    margin: 11px 0 0 10px;
}

.rec-btn {
    width: 46px;
    height: 23px;
    background: #34495e;
    color: #ecf0f1;
    font-size: 10px;
    line-height: 23px;
    text-align: center;
}

.rec-btn-cut {
    width: 23px;
    overflow: hidden;
}

.rec-export {
    width: 169px;
    margin: 6px 0 0 9px;
}
```
